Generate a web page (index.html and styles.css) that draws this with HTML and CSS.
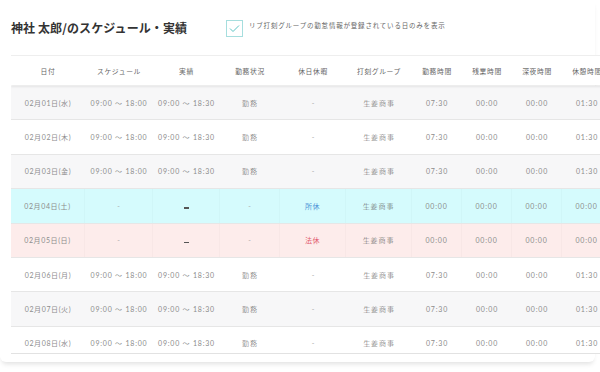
FILE: index.html
```html
<!DOCTYPE html>
<html lang="ja">
<head>
<meta charset="utf-8">
<link rel="stylesheet" href="styles.css">
</head>
<body>
<div class="card">
  <div class="top">
    <h1 class="title">神社 太郎/のスケジュール・実績</h1>
    <label class="check">
      <span class="box"><svg width="11" height="9" viewBox="0 0 11 9"><path d="M1 4.5 L4 7.5 L10 1.5" fill="none" stroke="#5cc4c4" stroke-width="1"/></svg></span>
      <span class="check-label">リブ打刻グループの勤怠情報が登録されている日のみを表示</span>
    </label>
  </div>
  <div class="table">
    <div class="row head">
      <div>日付</div><div>スケジュール</div><div>実績</div><div>勤務状況</div><div>休日休暇</div><div>打刻グループ</div><div>勤務時間</div><div>残業時間</div><div>深夜時間</div><div>休憩時間</div>
    </div>
    <div class="row gray">
      <div class="d">02月01日(水)</div><div class="n">09:00 〜 18:00</div><div class="n">09:00 〜 18:30</div><div class="k">勤務</div><div class="m">-</div><div class="k">生姜商事</div><div class="n">07:30</div><div class="n">00:00</div><div class="n">00:00</div><div class="n">01:30</div>
    </div>
    <div class="row">
      <div class="d">02月02日(木)</div><div class="n">09:00 〜 18:00</div><div class="n">09:00 〜 18:30</div><div class="k">勤務</div><div class="m">-</div><div class="k">生姜商事</div><div class="n">07:30</div><div class="n">00:00</div><div class="n">00:00</div><div class="n">01:30</div>
    </div>
    <div class="row gray">
      <div class="d">02月03日(金)</div><div class="n">09:00 〜 18:00</div><div class="n">09:00 〜 18:30</div><div class="k">勤務</div><div class="m">-</div><div class="k">生姜商事</div><div class="n">07:30</div><div class="n">00:00</div><div class="n">00:00</div><div class="n">01:30</div>
    </div>
    <div class="row cyan">
      <div class="d">02月04日(土)</div><div class="m">-</div><div><span class="bar"></span></div><div class="m">-</div><div class="blue">所休</div><div class="k">生姜商事</div><div class="n">00:00</div><div class="n">00:00</div><div class="n">00:00</div><div class="n">00:00</div>
    </div>
    <div class="row pink">
      <div class="d">02月05日(日)</div><div class="m">-</div><div><span class="bar"></span></div><div class="m">-</div><div class="red">法休</div><div class="k">生姜商事</div><div class="n">00:00</div><div class="n">00:00</div><div class="n">00:00</div><div class="n">00:00</div>
    </div>
    <div class="row">
      <div class="d">02月06日(月)</div><div class="n">09:00 〜 18:00</div><div class="n">09:00 〜 18:30</div><div class="k">勤務</div><div class="m">-</div><div class="k">生姜商事</div><div class="n">07:30</div><div class="n">00:00</div><div class="n">00:00</div><div class="n">01:30</div>
    </div>
    <div class="row gray">
      <div class="d">02月07日(火)</div><div class="n">09:00 〜 18:00</div><div class="n">09:00 〜 18:30</div><div class="k">勤務</div><div class="m">-</div><div class="k">生姜商事</div><div class="n">07:30</div><div class="n">00:00</div><div class="n">00:00</div><div class="n">01:30</div>
    </div>
    <div class="row">
      <div class="d">02月08日(水)</div><div class="n">09:00 〜 18:00</div><div class="n">09:00 〜 18:30</div><div class="k">勤務</div><div class="m">-</div><div class="k">生姜商事</div><div class="n">07:30</div><div class="n">00:00</div><div class="n">00:00</div><div class="n">01:30</div>
    </div>
  </div>
</div>
</body>
</html>
```
FILE: styles.css
```css
html, body {
  margin: 0;
  padding: 0;
  background: #ffffff;
  overflow: hidden;
  width: 600px;
  height: 372px;
}
body {
  font-family: "Lato", "Noto Sans CJK JP", sans-serif;
  color: #666;
}
.card {
  width: 595px;
  height: 362px;
  box-sizing: border-box;
  padding: 19px 0 0 11px;
  border-radius: 0 0 6px 6px;
  box-shadow: 0 4px 5px -2px rgba(0, 0, 0, 0.12);
  background: #fff;
}
.top {
  display: flex;
  align-items: center;
  height: 18px;
}
.title {
  margin: 0;
  font-family: "Noto Sans CJK JP", sans-serif;
  font-size: 12px;
  font-weight: 700;
  color: #333;
  letter-spacing: 0.1px;
  width: 215px;
  line-height: 18px;
}
.check {
  display: flex;
  align-items: center;
  gap: 6px;
}
.box {
  border: 1px solid #a6dede;
  display: flex;
  align-items: center;
  justify-content: center;
  box-sizing: border-box;
  width: 17px;
  height: 17px;
}
.check-label {
  font-family: "Noto Sans CJK JP", sans-serif;
  font-size: 6.5px;
  letter-spacing: 0.8px;
  color: #666;
  margin-top: -6px;
}
.table {
  margin-top: 18px;
  width: 601px;
  height: 299px;
  overflow: hidden;
  border-top: 1px solid #eee;
  border-bottom: 1px solid #e2e2e2;
  box-sizing: border-box;
}
.row {
  display: grid;
  grid-template-columns: 74px 68px 67px 60px 66px 66px 50px 50px 50px 50px;
  height: 34.4px;
  box-sizing: border-box;
  border-bottom: 1px solid #e6e6e6;
  font-size: 7px;
  background: #fff;
}
.row > div {
  display: flex;
  align-items: center;
  justify-content: center;
}
.row.head {
  height: 29px;
  border-bottom: none;
  box-shadow: 0 2px 2px rgba(0, 0, 0, 0.08);
  position: relative;
  z-index: 1;
  margin-bottom: 1px;
  font-family: "Noto Sans CJK JP", sans-serif;
  color: #666;
  letter-spacing: 0.6px;
  font-size: 6.8px;
}
.row.gray { background: #f7f7f8; }
.row.cyan { background: #d5fbfd; }
.row.pink { background: #fdeceb; }
.row.cyan > div, .row.pink > div {
  border-right: 1px solid rgba(0, 0, 0, 0.018);
}
.d {
  color: #8c8c8c;
  letter-spacing: 0.6px;
}
.n {
  color: #8c8c8c;
  letter-spacing: 0.8px;
}
.k {
  font-family: "Noto Sans CJK JP", sans-serif;
  font-weight: 300;
  color: #666;
  letter-spacing: 0.9px;
}
.m {
  color: #aaa;
}
.blue {
  font-family: "Noto Sans CJK JP", sans-serif;
  color: #4b8fd6;
  letter-spacing: 0.5px;
}
.red {
  font-family: "Noto Sans CJK JP", sans-serif;
  color: #e2586b;
  letter-spacing: 0.5px;
}
.bar {
  display: block;
  width: 5px;
  height: 1.5px;
  background: #555;
  margin-top: 4px;
}
```
